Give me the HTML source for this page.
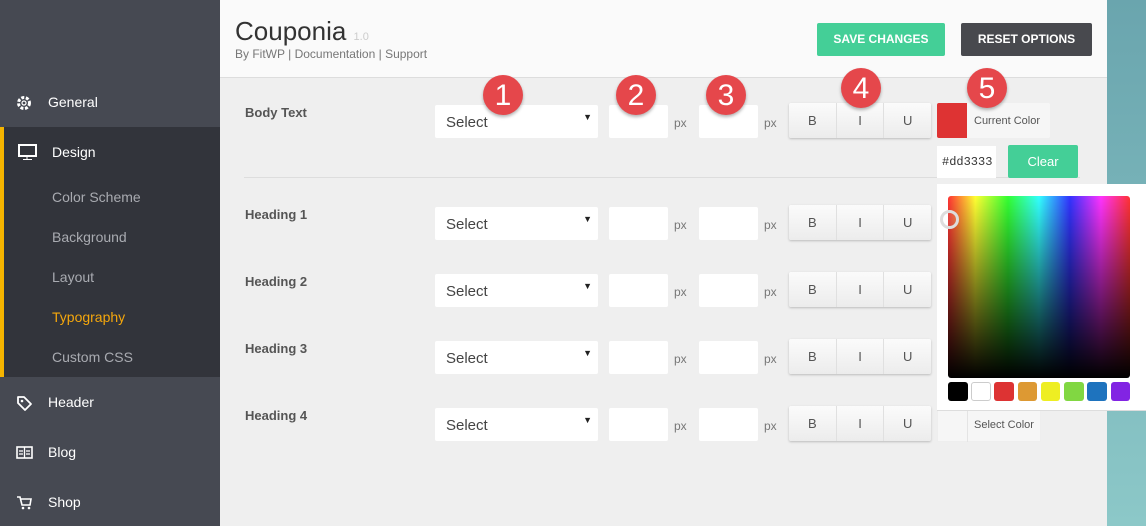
<!DOCTYPE html><html><head><style>
*{margin:0;padding:0;box-sizing:border-box}
body{width:1146px;height:526px;overflow:hidden;position:relative;font-family:"Liberation Sans",sans-serif;background:#efefef}
.a{position:absolute}
.sb{left:0;top:0;width:220px;height:526px;background:#464952}
.nav{left:0;width:220px;color:#fff;font-size:14px}
.nav span{position:absolute;left:48px}
.sub{left:52px;color:#a9abb1;font-size:14px}
.hd{left:220px;top:0;width:887px;height:78px;background:#fafafa;border-bottom:1px solid #ddd}
.btn{color:#fff;font-size:12px;font-weight:bold;text-align:center;line-height:33px;border-radius:2px}
.lbl{left:245px;font-size:13px;font-weight:bold;color:#555}
.sel{width:163px;height:33px;background:#fff;border-radius:2px;font-size:15px;color:#444;padding:9px 0 0 11px}
.sel:after{content:"▼";position:absolute;right:6px;top:7px;font-size:9px;color:#222}
.in{width:59px;height:33px;background:#fff;border-radius:2px}
.px{font-size:12px;color:#777}
.biu{width:142px;height:35px;background:linear-gradient(#fbfbfb,#ececec);border-radius:2px;box-shadow:0 1px 2px #bbb;display:flex}
.biu div{flex:1;text-align:center;line-height:35px;font-size:13px;color:#555;border-right:1px solid #e0e0e0}
.biu div:last-child{border:none}
.bd{width:40px;height:40px;border-radius:50%;background:#e5474b;color:#fff;font-size:30px;text-align:center;line-height:41px;box-shadow:0 2px 3px rgba(0,0,0,.3)}
</style></head><body>
<div class="a sb"></div>
<div class="a" style="left:0;top:127px;width:220px;height:250px;background:#32343b"></div>
<div class="a" style="left:0;top:127px;width:4px;height:250px;background:#f5b400"></div>
<div class="a nav" style="top:94px"><svg class="a" style="left:16px;top:1px" width="16" height="16" viewBox="0 0 16 16"><circle cx="8" cy="8" r="5.5" fill="none" stroke="#fff" stroke-width="3" stroke-dasharray="3 1.6"/><circle cx="8" cy="8" r="2" fill="none" stroke="#fff" stroke-width="1.2"/></svg><span>General</span></div>
<div class="a nav" style="top:144px"><svg class="a" style="left:18px;top:0" width="20" height="17"><rect x="1" y="1" width="17" height="11" fill="none" stroke="#fff" stroke-width="2"/><path d="M9 12v3M5 15.5h9" stroke="#fff"/></svg><span style="left:52px">Design</span></div>
<div class="a sub" style="top:189px">Color Scheme</div>
<div class="a sub" style="top:229px">Background</div>
<div class="a sub" style="top:269px">Layout</div>
<div class="a sub" style="top:309px;color:#f5a70c">Typography</div>
<div class="a sub" style="top:349px">Custom CSS</div>
<div class="a nav" style="top:394px"><svg class="a" style="left:16px;top:1px" width="17" height="17"><path d="M2 2h6l7 7-6 6-7-7z" fill="none" stroke="#fff" stroke-width="1.8" stroke-linejoin="round"/><circle cx="6" cy="6" r="1.3" fill="#fff"/></svg><span>Header</span></div>
<div class="a nav" style="top:444px"><svg class="a" style="left:16px;top:2px" width="18" height="14"><rect x="1" y="1" width="15" height="11" fill="none" stroke="#fff" stroke-width="1.6"/><path d="M8.5 1v11M3 5h4M3 8h4M10 5h4M10 8h4" stroke="#fff" stroke-width="1.3"/></svg><span>Blog</span></div>
<div class="a nav" style="top:494px"><svg class="a" style="left:16px;top:1px" width="16" height="16"><path d="M1 2h3l2 8h8l1-6H5" fill="none" stroke="#fff" stroke-width="1.6"/><circle cx="7" cy="13" r="1.3" fill="#fff"/><circle cx="13" cy="13" r="1.3" fill="#fff"/></svg><span>Shop</span></div>
<div class="a" style="left:1107px;top:0;width:39px;height:526px;background:linear-gradient(#6aa5ae,#8cc8c8)"></div>
<div class="a hd"></div>
<div class="a" style="left:235px;top:16px;font-size:26px;color:#333">Couponia <span style="font-size:11px;color:#ccc">1.0</span></div>
<div class="a" style="left:235px;top:47px;font-size:12px;color:#777">By FitWP | Documentation | Support</div>
<div class="a btn" style="left:817px;top:23px;width:128px;height:33px;background:#44cf97">SAVE CHANGES</div>
<div class="a btn" style="left:961px;top:23px;width:131px;height:33px;background:#48494e">RESET OPTIONS</div>

<div class="a lbl" style="top:105px">Body Text</div>
<div class="a lbl" style="top:207px">Heading 1</div>
<div class="a lbl" style="top:274px">Heading 2</div>
<div class="a lbl" style="top:341px">Heading 3</div>
<div class="a lbl" style="top:408px">Heading 4</div>
<div class="a" style="left:244px;top:177px;width:836px;height:1px;background:#ddd"></div>

<div class="a sel" style="left:435px;top:105px">Select</div>
<div class="a in" style="left:609px;top:105px"></div><div class="a px" style="left:674px;top:116px">px</div>
<div class="a in" style="left:699px;top:105px"></div><div class="a px" style="left:764px;top:116px">px</div>
<div class="a biu" style="left:789px;top:103px"><div>B</div><div>I</div><div>U</div></div>

<div class="a sel" style="left:435px;top:207px">Select</div>
<div class="a in" style="left:609px;top:207px"></div><div class="a px" style="left:674px;top:218px">px</div>
<div class="a in" style="left:699px;top:207px"></div><div class="a px" style="left:764px;top:218px">px</div>
<div class="a biu" style="left:789px;top:205px"><div>B</div><div>I</div><div>U</div></div>

<div class="a sel" style="left:435px;top:274px">Select</div>
<div class="a in" style="left:609px;top:274px"></div><div class="a px" style="left:674px;top:285px">px</div>
<div class="a in" style="left:699px;top:274px"></div><div class="a px" style="left:764px;top:285px">px</div>
<div class="a biu" style="left:789px;top:272px"><div>B</div><div>I</div><div>U</div></div>

<div class="a sel" style="left:435px;top:341px">Select</div>
<div class="a in" style="left:609px;top:341px"></div><div class="a px" style="left:674px;top:352px">px</div>
<div class="a in" style="left:699px;top:341px"></div><div class="a px" style="left:764px;top:352px">px</div>
<div class="a biu" style="left:789px;top:339px"><div>B</div><div>I</div><div>U</div></div>

<div class="a sel" style="left:435px;top:408px">Select</div>
<div class="a in" style="left:609px;top:408px"></div><div class="a px" style="left:674px;top:419px">px</div>
<div class="a in" style="left:699px;top:408px"></div><div class="a px" style="left:764px;top:419px">px</div>
<div class="a biu" style="left:789px;top:406px"><div>B</div><div>I</div><div>U</div></div>

<div class="a" style="left:937px;top:103px;width:113px;height:35px;background:#f6f6f6;border-radius:2px"></div>
<div class="a" style="left:937px;top:103px;width:30px;height:35px;background:#de3333;border-radius:2px 0 0 2px"></div>
<div class="a" style="left:974px;top:115px;font-size:11px;color:#555">Current Color</div>
<div class="a" style="left:937px;top:146px;width:59px;height:32px;background:#fff;font-family:'Liberation Mono',monospace;font-size:12px;color:#333;padding:9px 0 0 5px;overflow:hidden;white-space:nowrap">#dd3333</div>
<div class="a" style="left:1008px;top:145px;width:70px;height:33px;background:#44cf97;color:#fff;font-size:13px;text-align:center;line-height:33px;border-radius:2px">Clear</div>

<div class="a" style="left:937px;top:408px;width:104px;height:34px;background:#f6f6f6;border:1px solid #eee"></div>
<div class="a" style="left:967px;top:408px;width:1px;height:34px;background:#e4e4e4"></div>
<div class="a" style="left:974px;top:419px;font-size:11px;color:#555">Select Color</div>

<div class="a" style="left:937px;top:184px;width:209px;height:227px;background:#fff;border-bottom:1px solid #ddd"></div>
<div class="a" style="left:948px;top:196px;width:182px;height:182px;border-radius:3px;background:linear-gradient(to bottom,rgba(0,0,0,0),#000),linear-gradient(to right,#f33,#ff3 15%,#3f3 33%,#3ff 50%,#33f 67%,#f3f 84%,#f33)"></div>
<div class="a" style="left:940px;top:210px;width:19px;height:19px;border-radius:50%;border:3px solid #ddd;background:rgba(255,255,255,.1)"></div>
<div class="a" style="left:948px;top:382px;width:20px;height:19px;border-radius:3px;background:#000"></div>
<div class="a" style="left:971px;top:382px;width:20px;height:19px;border-radius:3px;background:#fff;border:1px solid #ccc"></div>
<div class="a" style="left:994px;top:382px;width:20px;height:19px;border-radius:3px;background:#dd3333"></div>
<div class="a" style="left:1018px;top:382px;width:19px;height:19px;border-radius:3px;background:#dd9933"></div>
<div class="a" style="left:1041px;top:382px;width:19px;height:19px;border-radius:3px;background:#eeee22"></div>
<div class="a" style="left:1064px;top:382px;width:20px;height:19px;border-radius:3px;background:#81d742"></div>
<div class="a" style="left:1087px;top:382px;width:20px;height:19px;border-radius:3px;background:#1e73be"></div>
<div class="a" style="left:1111px;top:382px;width:19px;height:19px;border-radius:3px;background:#8224e3"></div>

<div class="a bd" style="left:483px;top:75px">1</div>
<div class="a bd" style="left:616px;top:75px">2</div>
<div class="a bd" style="left:706px;top:75px">3</div>
<div class="a bd" style="left:841px;top:68px">4</div>
<div class="a bd" style="left:967px;top:68px">5</div>
</body></html>
